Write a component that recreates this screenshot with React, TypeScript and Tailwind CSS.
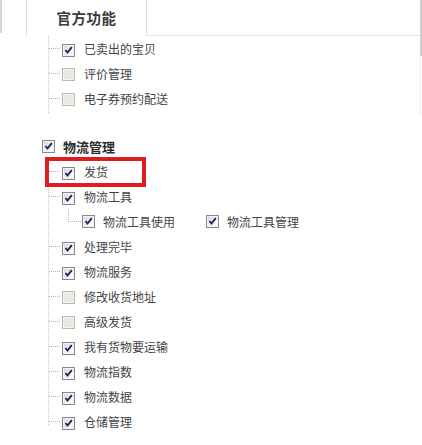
import React from "react";

const FONT = { fontFamily: '"Noto Sans CJK SC", "Noto Sans", sans-serif' };

function Box({ checked = true, disabled = false }: { checked?: boolean; disabled?: boolean }) {
  return (
    <span
      className={
        "relative inline-flex h-[13px] w-[13px] shrink-0 items-center justify-center border " +
        (disabled ? "border-[#b9b9b2] bg-[#f4f4ee]" : "border-[#7f8a96] bg-[#f2f2f2]")
      }
    >
      <span
        className={
          "absolute inset-[1px] " +
          (disabled ? "bg-[#e9e9e2]" : "bg-gradient-to-br from-[#dcdcd6] to-[#ffffff]")
        }
      />
      {checked && (
        <svg viewBox="0 0 11 11" className="relative h-[11px] w-[11px]">
          <path d="M2.5 5 L4.5 7.5 L8.8 2.2" fill="none" stroke="#21215f" strokeWidth="1.9" />
        </svg>
      )}
    </span>
  );
}

function Row({
  label,
  checked = true,
  disabled = false,
}: {
  label: string;
  checked?: boolean;
  disabled?: boolean;
}) {
  return (
    <div className="flex h-[25px] items-center">
      <span className="w-[11px] border-t border-dotted border-[#b4b4b4]" />
      <span className="ml-[2px]">
        <Box checked={checked} disabled={disabled} />
      </span>
      <span className="ml-[9px] text-[12px] leading-none text-[#444]">{label}</span>
    </div>
  );
}

function SubItem({ label }: { label: string }) {
  return (
    <div className="flex items-center">
      <Box />
      <span className="ml-[8px] text-[12px] leading-none text-[#444]">{label}</span>
    </div>
  );
}

export default function App() {
  return (
    <div className="flex h-[445px] w-[422px] overflow-hidden bg-white" style={FONT}>
      <div className="flex w-[420px] flex-col">
        {/* header */}
        <div className="flex h-[36px] shrink-0">
          <div className="h-[33px] w-[26px] border-l-2 border-[#d6d6d6]" />
          <div className="flex w-[121px] items-center justify-center border-x border-[#e2e0d6] pb-[1px]">
            <span className="text-[14.5px] font-bold tracking-[0.5px] text-[#3c3c3c]">官方功能</span>
          </div>
          <div className="flex-1 border-b border-[#e4e2d6]" />
        </div>

        {/* group 1 */}
        <div className="ml-[48px] border-l border-dotted border-[#c4c4c4] pb-[2px]">
          <Row label="已卖出的宝贝" />
          <Row label="评价管理" checked={false} disabled />
          <Row label="电子券预约配送" checked={false} disabled />
        </div>

        {/* 物流管理 */}
        <div className="ml-[42px] mt-[21px] flex h-[25px] items-center">
          <Box />
          <span className="ml-[8px] text-[13px] font-bold leading-none text-[#2e2e2e]">物流管理</span>
        </div>

        <div className="ml-[48px] h-[266px] border-l border-dotted border-[#c4c4c4]">
          <div className="relative">
            <Row label="发货" />
            <div className="pointer-events-none absolute left-[-4px] top-[-2px] h-[30px] w-[101px] border-4 border-[#e11b22]" />
          </div>
          <Row label="物流工具" />
          <div className="ml-[19px] flex h-[25px]">
            <div className="h-[13px] w-[13px] border-b border-l border-dotted border-[#b4b4b4]" />
            <div className="ml-[1px] flex items-center">
              <div className="w-[124px]">
                <SubItem label="物流工具使用" />
              </div>
              <SubItem label="物流工具管理" />
            </div>
          </div>
          <Row label="处理完毕" />
          <Row label="物流服务" />
          <Row label="修改收货地址" checked={false} disabled />
          <Row label="高级发货" checked={false} disabled />
          <Row label="我有货物要运输" />
          <Row label="物流指数" />
          <Row label="物流数据" />
          <Row label="仓储管理" />
        </div>
      </div>
      <div className="w-[2px]">
        <div className="h-[56px] w-[2px] bg-[#cfcfcf]" />
        <div className="h-[60px] w-[1px] bg-[#ececec]" />
      </div>
    </div>
  );
}
